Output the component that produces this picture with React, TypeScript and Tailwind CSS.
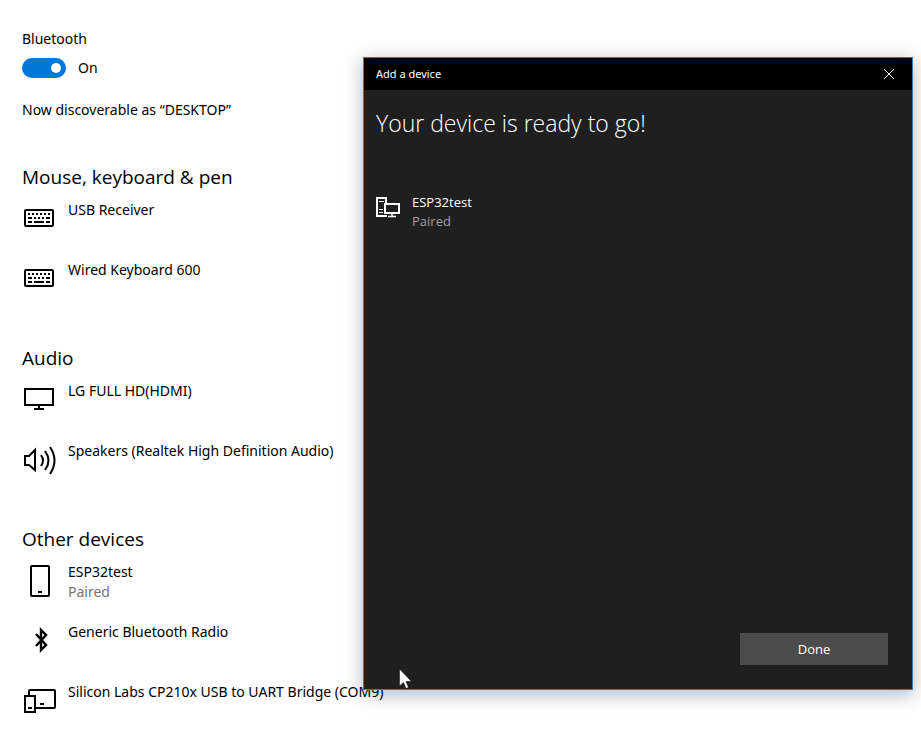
import { useState, type ReactNode } from "react";

type Device = { name: string; status?: string; icon: ReactNode };

/* Icons share a 36x40 box so that every row lines up */
function Icon({ children }: { children: ReactNode }) {
  return (
    <svg
      viewBox="0 0 36 40"
      className="h-10 w-9 shrink-0"
      fill="none"
      stroke="currentColor"
      strokeWidth={2}
      aria-hidden="true"
    >
      {children}
    </svg>
  );
}

function KeyboardIcon() {
  return (
    <Icon>
      <rect x="3" y="10" width="28" height="16" rx="1" />
      <path d="M6 14h2M10 14h2M14 14h2M18 14h2M22 14h2M26 14h2" />
      <path d="M6 18h4M12 18h2M16 18h2M20 18h2M24 18h4" />
      <path d="M6 22h4M12 22h10M24 22h4" />
    </Icon>
  );
}

function MonitorIcon() {
  return (
    <Icon>
      <path d="M3 8h28v16H3zM17 24v4M12 28h10" />
    </Icon>
  );
}

function SpeakerIcon() {
  return (
    <Icon>
      <path d="M3 15h4l6-6v20l-6-5H3z" />
      <path d="M19 14q4 5.500 0 11M23 10q7 9.500 0 19M28 6q9 13.500 0 27" />
    </Icon>
  );
}

function PhoneIcon() {
  return (
    <Icon>
      <rect x="9" y="4" width="18" height="30" rx="1" />
      <path d="M16 30h4" />
    </Icon>
  );
}

function BluetoothIcon() {
  return (
    <Icon>
      <path d="M14 12l10 11-5 5V8l5 5-10 11" strokeWidth={2.400} />
    </Icon>
  );
}

function DevicesIcon() {
  return (
    <Icon>
      <path d="M7 13V9q0-1 1-1h24q1 0 1 1v16q0 1-1 1H14M18 22h4" />
      <path d="M3 14h10v16H3zM6 26h4" />
    </Icon>
  );
}

const sections: { title: string; devices: Device[] }[] = [
  {
    title: "Mouse, keyboard & pen",
    devices: [
      { name: "USB Receiver", icon: <KeyboardIcon /> },
      { name: "Wired Keyboard 600", icon: <KeyboardIcon /> },
    ],
  },
  {
    title: "Audio",
    devices: [
      { name: "LG FULL HD(HDMI)", icon: <MonitorIcon /> },
      { name: "Speakers (Realtek High Definition Audio)", icon: <SpeakerIcon /> },
    ],
  },
  {
    title: "Other devices",
    devices: [
      { name: "ESP32test", status: "Paired", icon: <PhoneIcon /> },
      { name: "Generic Bluetooth Radio", icon: <BluetoothIcon /> },
      { name: "Silicon Labs CP210x USB to UART Bridge (COM9)", icon: <DevicesIcon /> },
    ],
  },
];

function AddDeviceDialog({ onClose }: { onClose: () => void }) {
  return (
    <div
      role="dialog"
      aria-labelledby="dialog-title"
      className="absolute top-[57px] right-2 bottom-[61px] left-[363px] flex flex-col border border-[#2f7fc0] bg-[#1f1f1f] text-white shadow-[0_4px_18px_rgba(0,0,0,0.3)]"
    >
      {/* Title bar */}
      <div className="flex h-8 shrink-0 items-center justify-between bg-black pl-3">
        <span id="dialog-title" className="font-['Noto_Sans',sans-serif] text-[11px]">
          Add a device
        </span>
        <button
          onClick={onClose}
          aria-label="Close"
          className="flex h-8 w-[46px] items-center justify-center"
        >
          <svg viewBox="0 0 10 10" className="size-[10px]" stroke="currentColor" aria-hidden="true">
            <path d="M0 0l10 10M10 0L0 10" />
          </svg>
        </button>
      </div>

      <div className="flex-1 px-3 pt-[17px]">
        <h1 className="text-[23px] leading-8 font-light">Your device is ready to go!</h1>
        <div className="mt-[54px] flex gap-3">
          <svg
            viewBox="0 0 24 24"
            className="mt-1 size-6 shrink-0"
            fill="none"
            stroke="currentColor"
            strokeWidth={2}
            aria-hidden="true"
          >
            <path d="M10 6V1H1v18h10" />
            <path d="M3 4.500h5M3 12.500h4M3 15.500h4" strokeWidth={1} />
            <path d="M9 7h14v9H9z" />
            <path d="M16 16v3M12 19.500h8" strokeWidth={1.500} />
          </svg>
          <div className="text-[13px] leading-[19px]">
            <p>ESP32test</p>
            <p className="text-[#a0a0a0]">Paired</p>
          </div>
        </div>
      </div>

      <div className="flex justify-end p-6">
        <button onClick={onClose} className="h-8 w-[148px] bg-[#4c4c4c] text-[13px]">
          Done
        </button>
      </div>
    </div>
  );
}

export default function App() {
  const [enabled, setEnabled] = useState(true);
  const [open, setOpen] = useState(true);

  return (
    <div className="relative min-h-screen overflow-hidden bg-white font-['Open_Sans',sans-serif] text-sm leading-5 text-black">
      <main className="px-[22px] pt-[29px] font-['Noto_Sans',sans-serif]">
        {/* Bluetooth switch */}
        <label htmlFor="bluetooth">Bluetooth</label>
        <div className="mt-[9px] flex items-center gap-3">
          <input
            id="bluetooth"
            type="checkbox"
            role="switch"
            checked={enabled}
            onChange={(e) => setEnabled(e.target.checked)}
            className="h-5 w-11 appearance-none rounded-full bg-[#999] p-[5px] before:block before:size-[10px] before:rounded-full before:bg-white checked:bg-[#0078d7] checked:before:ml-6"
          />
          <span>{enabled ? "On" : "Off"}</span>
        </div>
        <p className="mt-[22px]">Now discoverable as “DESKTOP”</p>

        {/* Device lists */}
        <div className="mt-[45px] flex flex-col gap-[26px]">
          {sections.map((section) => (
            <section key={section.title}>
              <h2 className="font-['Open_Sans',sans-serif] text-[19px] leading-6">{section.title}</h2>
              <ul className="mt-[11px]">
                {section.devices.map((device) => (
                  <li key={device.name} className="flex h-[60px] gap-[10px]">
                    {device.icon}
                    <div className="whitespace-nowrap">
                      <p>{device.name}</p>
                      {device.status && <p className="text-[#767676]">{device.status}</p>}
                    </div>
                  </li>
                ))}
              </ul>
            </section>
          ))}
        </div>
      </main>

      {open && <AddDeviceDialog onClose={() => setOpen(false)} />}

      {/* Pointer */}
      <svg
        viewBox="0 0 13 20"
        className="pointer-events-none absolute top-[669px] left-[399px] h-5 w-[13px]"
        aria-hidden="true"
      >
        <path
          d="M.5 0v17l4-3.500L7 19.500l2.500-1.100L7 12.500h5.500z"
          fill="white"
          stroke="black"
          strokeWidth={0.500}
        />
      </svg>
    </div>
  );
}
